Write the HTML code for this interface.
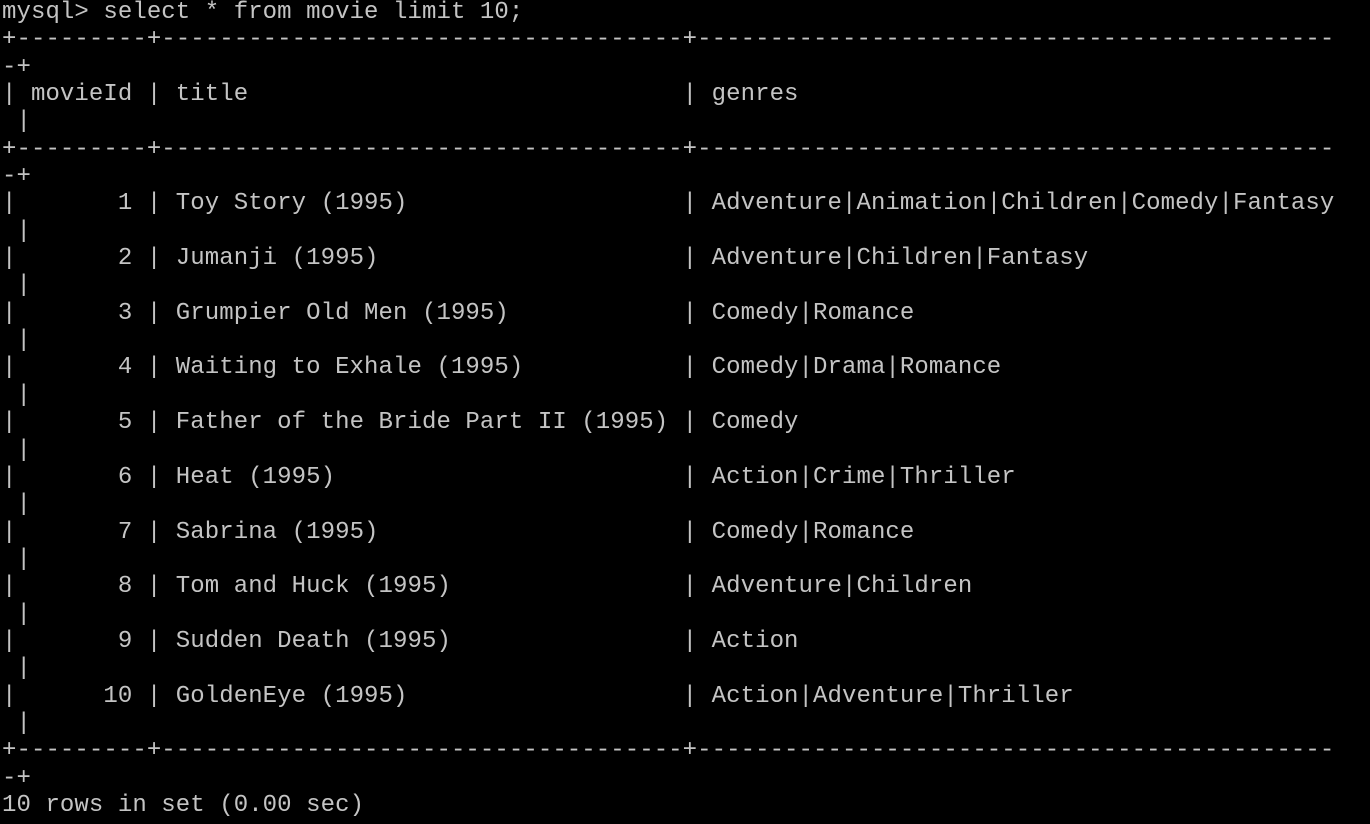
<!DOCTYPE html>
<html><head><meta charset="utf-8"><style>
html,body{margin:0;padding:0;background:#000;width:1370px;height:824px;overflow:hidden}
pre{margin:0;position:absolute;left:2px;top:-1px;font-family:"Liberation Mono","Courier New",monospace;font-size:24px;letter-spacing:0.08px;line-height:27.35px;color:#c4c4c4;white-space:pre}
</style></head><body><pre>mysql&gt; select * from movie limit 10;
+---------+------------------------------------+--------------------------------------------
-+
| movieId | title                              | genres
 |
+---------+------------------------------------+--------------------------------------------
-+
|       1 | Toy Story (1995)                   | Adventure|Animation|Children|Comedy|Fantasy
 |
|       2 | Jumanji (1995)                     | Adventure|Children|Fantasy
 |
|       3 | Grumpier Old Men (1995)            | Comedy|Romance
 |
|       4 | Waiting to Exhale (1995)           | Comedy|Drama|Romance
 |
|       5 | Father of the Bride Part II (1995) | Comedy
 |
|       6 | Heat (1995)                        | Action|Crime|Thriller
 |
|       7 | Sabrina (1995)                     | Comedy|Romance
 |
|       8 | Tom and Huck (1995)                | Adventure|Children
 |
|       9 | Sudden Death (1995)                | Action
 |
|      10 | GoldenEye (1995)                   | Action|Adventure|Thriller
 |
+---------+------------------------------------+--------------------------------------------
-+
10 rows in set (0.00 sec)</pre></body></html>
